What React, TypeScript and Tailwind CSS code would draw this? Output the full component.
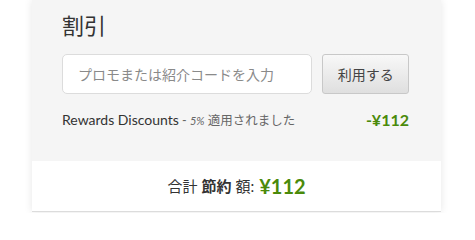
import React from "react";

const font = { fontFamily: "Lato, 'Noto Sans CJK JP', sans-serif" };

export default function App() {
  return (
    <div className="w-[475px] h-[213px] bg-white overflow-hidden" style={font}>
      <div className="ml-[32px] w-[409px] bg-white shadow-[0_0_8px_rgba(0,0,0,0.1)] border-b border-[#dcdcdc]">
        {/* 割引 */}
        <div className="bg-[#f5f5f5] pl-[30px] pr-[32px] pt-[12px] h-[161px]">
          <h2 className="text-[22px] leading-[28px] text-[#333]">割引</h2>
          <div className="flex gap-[10px] mt-[14px]">
            <input
              className="w-[251px] h-[40px] bg-white border border-[#dcdcdc] rounded-[5px] px-[15px] text-[14px] text-[#333] placeholder:text-[#8a8a8a] outline-none"
              placeholder="プロモまたは紹介コードを入力"
            />
            <button className="w-[87px] h-[40px] rounded-[3px] border border-[#c8c8c8] bg-gradient-to-b from-[#f8f8f8] to-[#dfdfdf] text-[14px] text-[#444]">
              利用する
            </button>
          </div>
          <div className="flex items-center justify-between mt-[14px]">
            <span className="text-[14px] text-[#333]">
              Rewards Discounts
              <span className="text-[12.5px] text-[#666]">
                {" - "}
                <span className="italic text-[11px]">5%</span>
                {" 適用されました"}
              </span>
            </span>
            <span className="text-[16px] font-bold text-[#4a8a0a]">-¥112</span>
          </div>
        </div>
        {/* 合計 */}
        <div className="h-[50px] flex items-center justify-center text-[15px] text-[#333]">
          <span>合計 </span>
          <span className="font-bold ml-[4px]">節約</span>
          <span className="ml-[4px]">額:</span>
          <span className="ml-[5px] text-[20px] font-bold text-[#4a8a0a]">¥112</span>
        </div>
      </div>
    </div>
  );
}
